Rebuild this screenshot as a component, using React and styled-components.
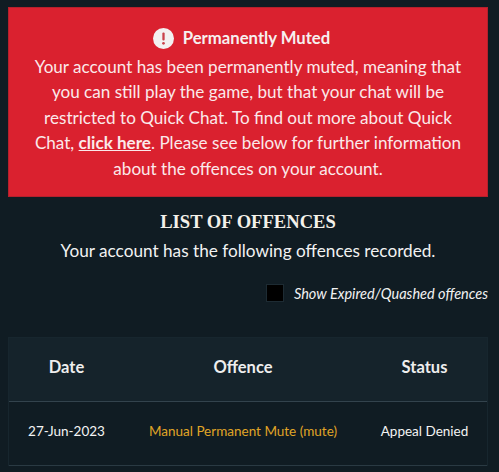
import React from "react"
import styled,{createGlobalStyle} from "styled-components"

const GlobalStyle = createGlobalStyle`
html,body{
	margin:0;
	padding:0;
	background:#101c23;
}
body{
	font-family:"Lato","Noto Sans",sans-serif;
	color:#f2f2f2;
}
`

const Page = styled.main`
width:499px;
height:472px;
box-sizing:border-box;
padding:7px 11px 0 8px;
overflow:hidden;
display:flex;
flex-direction:column;
`

const Banner = styled.section`
height:190px;
box-sizing:border-box;
background:#da212f;
border:1px solid #b5202c;
padding:15px 20px 0;
text-align:center;
color:#fbe9ea;
`

const BannerTitle = styled.h2`
margin:0;
height:30.6px;
padding-right:13px;
display:flex;
align-items:center;
justify-content:center;
gap:9px;
font-size:16.7px;
font-weight:700;
color:#f6f0f0;
`

const AlertIcon = styled.svg`
width:21px;
height:21px;
`

const BannerText = styled.p`
margin:0;
font-size:17.1px;
line-height:25.5px;
`

const Link = styled.a`
font-weight:700;
color:inherit;
text-decoration:underline;
cursor:pointer;
`

const Heading = styled.h1`
margin:13px 0 0;
height:24px;
font-family:"Liberation Serif",serif;
font-size:18.6px;
line-height:24px;
font-weight:700;
text-align:center;
color:#f4f1ea;
`

const Intro = styled.p`
margin:5px 0 0;
height:24px;
font-size:17.2px;
line-height:24px;
text-align:center;
`

const FilterRow = styled.label`
margin-top:20px;
height:20px;
display:flex;
align-items:center;
justify-content:flex-end;
gap:10px;
font-size:14.5px;
font-style:italic;
`

const Check = styled.span`
width:16px;
height:16px;
background:#000;
border:1px solid #1d2b33;
`

const Table = styled.table`
margin-top:34px;
width:480px;
border-collapse:separate;
border-spacing:0;
table-layout:fixed;
border-left:1px solid #17262e;
border-right:1px solid #17262e;
`

const HeadCell = styled.th`
padding:0 0 5px;
height:58px;
width:${props=>props.width}px;
background:#15232b;
border-top:1px solid #17262e;
border-bottom:1px solid #33434d;
font-size:16.5px;
font-weight:700;
color:#eeeeee;
`

const BodyCell = styled.td`
padding:0 0 5px;
height:58px;
text-align:center;
border-bottom:1px solid #2a3a43;
font-size:13.5px;
color:${props=>props.accent ? "#e0a526" : "#f4f4f4"};
`

const App = ()=>{
	return(
		<Page>
			<GlobalStyle/>
			<Banner>
				<BannerTitle>
					<AlertIcon viewBox="0 0 20 20">
						<circle cx="10" cy="10" r="10" fill="#f3f0f0"/>
						<rect x="8.9" y="4.2" width="2.2" height="7.8" rx="1" fill="#c9414a"/>
						<circle cx="10" cy="14.6" r="1.3" fill="#c9414a"/>
					</AlertIcon>
					Permanently Muted
				</BannerTitle>
				<BannerText>
					Your account has been permanently muted, meaning that you can still play the game, but that your chat will be restricted to Quick Chat. To find out more about Quick Chat, <Link>click here</Link>. Please see below for further information about the offences on your account.
				</BannerText>
			</Banner>
			<Heading>LIST OF OFFENCES</Heading>
			<Intro>Your account has the following offences recorded.</Intro>
			<FilterRow>
				<Check/>
				Show Expired/Quashed offences
			</FilterRow>
			<Table>
				<thead>
					<tr>
						<HeadCell width={115}>Date</HeadCell>
						<HeadCell width={238}>Offence</HeadCell>
						<HeadCell width={125}>Status</HeadCell>
					</tr>
				</thead>
				<tbody>
					<tr>
						<BodyCell>27-Jun-2023</BodyCell>
						<BodyCell accent>Manual Permanent Mute (mute)</BodyCell>
						<BodyCell>Appeal Denied</BodyCell>
					</tr>
				</tbody>
			</Table>
		</Page>
		)
}

export default App;
